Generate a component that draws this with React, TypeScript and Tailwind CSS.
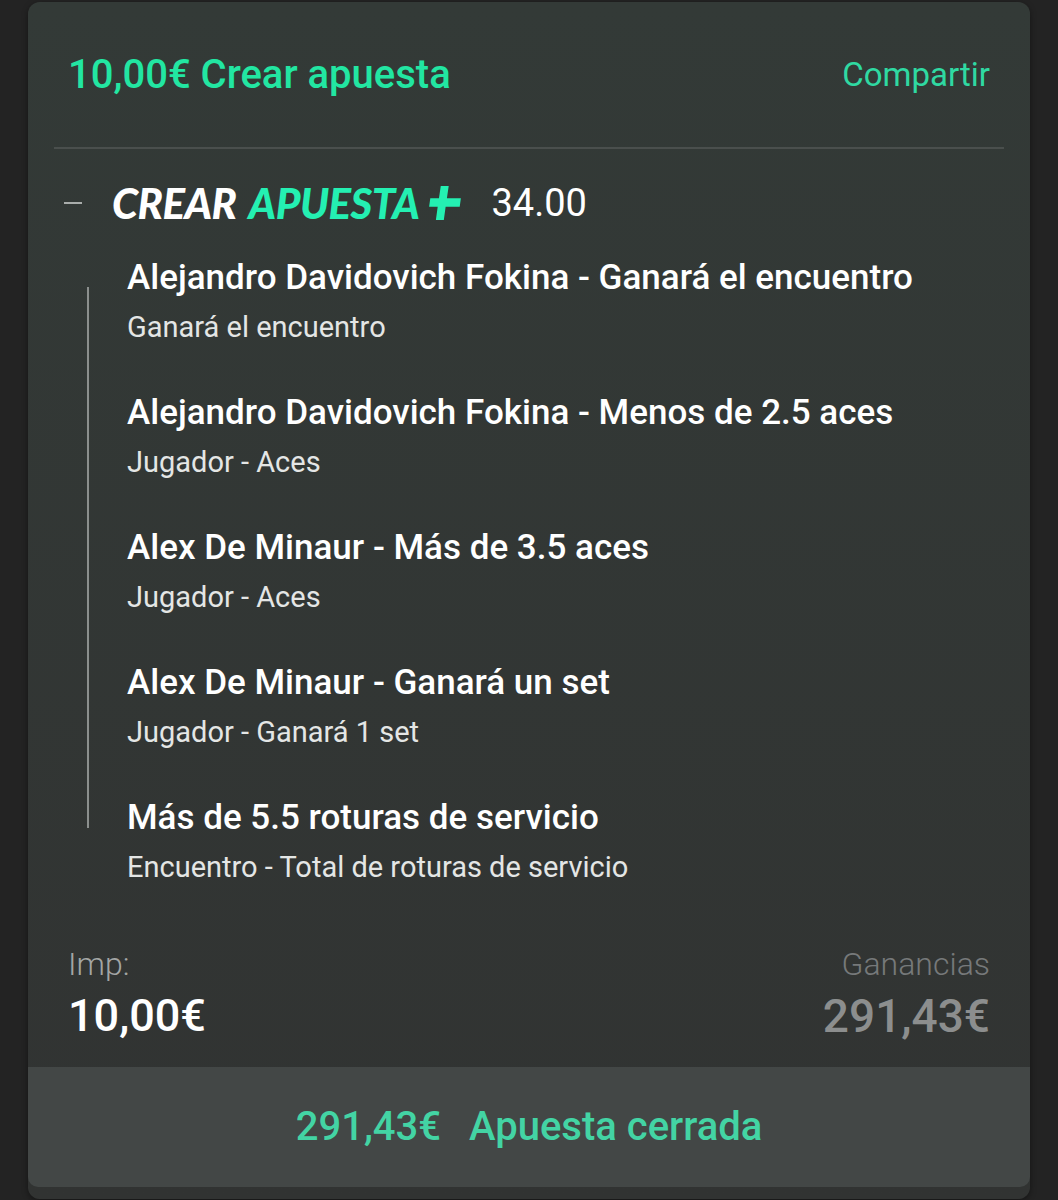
const selections = [
  { title: 'Alejandro Davidovich Fokina - Ganará el encuentro', sub: 'Ganará el encuentro' },
  { title: 'Alejandro Davidovich Fokina - Menos de 2.5 aces', sub: 'Jugador - Aces' },
  { title: 'Alex De Minaur - Más de 3.5 aces', sub: 'Jugador - Aces' },
  { title: 'Alex De Minaur - Ganará un set', sub: 'Jugador - Ganará 1 set' },
  { title: 'Más de 5.5 roturas de servicio', sub: 'Encuentro - Total de roturas de servicio' },
]

export default function App() {
  return (
    <div className="min-h-[1200px] bg-[#232323] pt-[2px] px-[28px] font-['Roboto',sans-serif]">
      <div className="rounded-[12px] bg-gradient-to-b from-[#333a37] to-[#313332] pb-[12px] shadow-[0_2px_6px_rgba(0,0,0,0.4)]">
        <div className="px-[26px]">
          <div className="flex h-[145px] items-center justify-between px-[14px]">
            <h2 className="text-[40px] font-medium text-[#22e6a2]">10,00€ Crear apuesta</h2>
            <span className="text-[33px] text-[#2fd9a2]">Compartir</span>
          </div>
          <div className="h-[2px] bg-[#4a4f4d]" />

          <div className="mt-[32px] flex h-[44px] items-center">
            <span className="ml-[10px] h-[2px] w-[18px] bg-[#a9adab]" />
            <span className="ml-[30px] font-['Lato',sans-serif] text-[42px] font-black italic tracking-[-0.5px] text-white">CREAR</span>
            <span className="ml-[12px] font-['Lato',sans-serif] text-[42px] font-black italic tracking-[-0.5px] text-[#24f0b2]">APUESTA</span>
            <span className="ml-[8px] flex h-[36px] w-[36px] items-center justify-center">
              <svg viewBox="0 0 34 34" className="h-[36px] w-[36px]">
                <path d="M13 1h7.5l-1.7 11.5H32l-1.1 8H17.6L15.9 33H8.4l1.7-12.5H2l1.1-8H11.3z" fill="#24f0b2" />
              </svg>
            </span>
            <span className="ml-[28px] text-[38px] text-white">34.00</span>
          </div>

          <div className="mt-[33px] flex">
            <div className="ml-[33px] mt-[29px] h-[541px] w-[2px] bg-[#8b8f8d]" />
            <div className="ml-[38px] flex flex-col gap-[48px]">
              {selections.map((s, i) => (
                <div key={i}>
                  <div className="text-[35px] leading-[40px] font-medium text-white">{s.title}</div>
                  <div className="mt-[11px] text-[29px] leading-[36px] text-[#e4e6e5]">{s.sub}</div>
                </div>
              ))}
            </div>
          </div>

          <div className="mt-[61px] flex justify-between px-[14px]">
            <div>
              <div className="text-[32px] leading-[36px] font-light text-[#a3a6a5]">Imp:</div>
              <div className="mt-[10px] text-[45px] leading-[48px] font-medium text-white">10,00€</div>
            </div>
            <div className="text-right">
              <div className="text-[32px] leading-[36px] font-light text-[#76797a]">Ganancias</div>
              <div className="mt-[10px] text-[46px] leading-[48px] font-medium text-[#8c8e8e]">291,43€</div>
            </div>
          </div>
        </div>

        <div className="mt-[27px] flex h-[120px] items-center justify-center gap-[28px] rounded-b-[10px] bg-[#434746] text-[40px] font-medium text-[#43d4a4]">
          <span>291,43€</span>
          <span>Apuesta cerrada</span>
        </div>
      </div>
    </div>
  )
}
